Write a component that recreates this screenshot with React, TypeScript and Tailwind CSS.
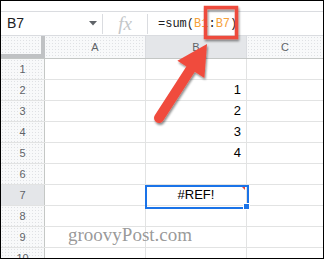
import React from 'react';

const ROWS = [1, 2, 3, 4, 5, 6, 7, 8, 9, 10];
const VALUES: Record<number, string> = { 2: '1', 3: '2', 4: '3', 5: '4' };

const headerBg = "bg-[#f8f9fa] bg-[radial-gradient(#dfe1e4_0.6px,transparent_0.6px)] bg-[length:3px_3px]";

const Annotations: React.FC = () => (
  <svg className="absolute left-0 top-0 pointer-events-none" width="324" height="259" viewBox="0 0 324 259">
    <defs>
      <filter id="shade" x="-30%" y="-30%" width="160%" height="160%">
        <feDropShadow dx="1" dy="2" stdDeviation="1.2" floodColor="#000" floodOpacity="0.45" />
      </filter>
    </defs>
    <g filter="url(#shade)">
      <rect x="204.5" y="6.5" width="31" height="30" fill="none" stroke="#ee4c3d" strokeWidth="3.5" />
    </g>
    <g filter="url(#shade)" fill="#f04c3e">
      <line x1="158" y1="117" x2="191" y2="66" stroke="#f04c3e" strokeWidth="10" strokeLinecap="round" />
      <polygon points="206,43 203.4,77 176.4,59.7" />
    </g>
  </svg>
);

export default function App() {
  return (
    <div className="relative w-[324px] h-[259px] overflow-hidden border border-black bg-white font-['Liberation_Sans',Arial,sans-serif]">
      <div className="h-[11px] border-b border-[#dadce0]" />

      <div className="flex h-[24px] items-center border-b border-[#dadce0]">
        <div className="flex w-[101px] items-center justify-between pl-[6px] pr-[5px]">
          <span className="text-[14px] text-[#202124]">B7</span>
          <svg width="8" height="5" viewBox="0 0 8 5"><polygon points="0,0 8,0 4,4.5" fill="#5f6368" /></svg>
        </div>
        <div className="h-[20px] w-px bg-[#dadce0]" />
        <div className="flex w-[44px] justify-center">
          <span className="font-['Liberation_Serif',serif] text-[19px] italic leading-none text-[#c4c7c9]">fx</span>
        </div>
        <div className="h-[20px] w-px bg-[#dadce0]" />
        <div className="pl-[10px] font-['Liberation_Mono',monospace] text-[12px] text-[#202124]">
          =sum(<span className="text-[#f5a13a]">B1</span>:<span className="text-[#f5a13a]">B7</span>)
        </div>
      </div>

      <div className="flex h-[23px] border-b border-[#c4c7c5] text-[11px] text-[#5f6368]">
        <div className={`w-[44px] border-r-[4px] border-b-[4px] border-[#c0c2c4] ${headerBg}`} />
        <div className={`flex w-[101px] items-center justify-center border-r border-[#dadce0] ${headerBg}`}>A</div>
        <div className="flex w-[101px] items-center justify-center border-r border-[#dadce0] bg-[#e4e6e9]">B</div>
        <div className={`flex flex-1 items-center justify-center ${headerBg}`}>C</div>
      </div>

      {ROWS.map((r) => (
        <div key={r} className="flex h-[21px] border-b border-[#e2e3e3]">
          <div className={`flex w-[44px] items-center justify-center border-r border-[#c4c7c5] text-[11px] text-[#5f6368] ${r === 7 ? 'bg-[#e4e6e9]' : headerBg}`}>{r}</div>
          <div className="w-[101px] border-r border-[#e2e3e3]" />
          <div className="relative flex w-[101px] items-center border-r border-[#e2e3e3] text-[13px] text-black">
            {r === 7 ? (
              <>
                <span className="w-full text-center">#REF!</span>
                <span className="absolute right-[1px] top-0 h-0 w-0 border-l-[5px] border-t-[5px] border-l-transparent border-t-[#ea4335]" />
              </>
            ) : (
              <span className="w-full pr-[5px] text-right">{VALUES[r] ?? ''}</span>
            )}
          </div>
          <div className="flex-1" />
        </div>
      ))}

      <div className="absolute left-[144px] top-[184px] h-[24px] w-[104px] border-2 border-[#1a73e8]" />
      <div className="absolute left-[242px] top-[202px] h-[7px] w-[7px] border border-white bg-[#1a73e8]" />

      <div className="absolute left-[67px] top-[224px] font-['Liberation_Serif',serif] text-[19px] leading-none text-[#8d8d8d]/90">
        groovyPost.com
      </div>

      <Annotations />
    </div>
  );
}
